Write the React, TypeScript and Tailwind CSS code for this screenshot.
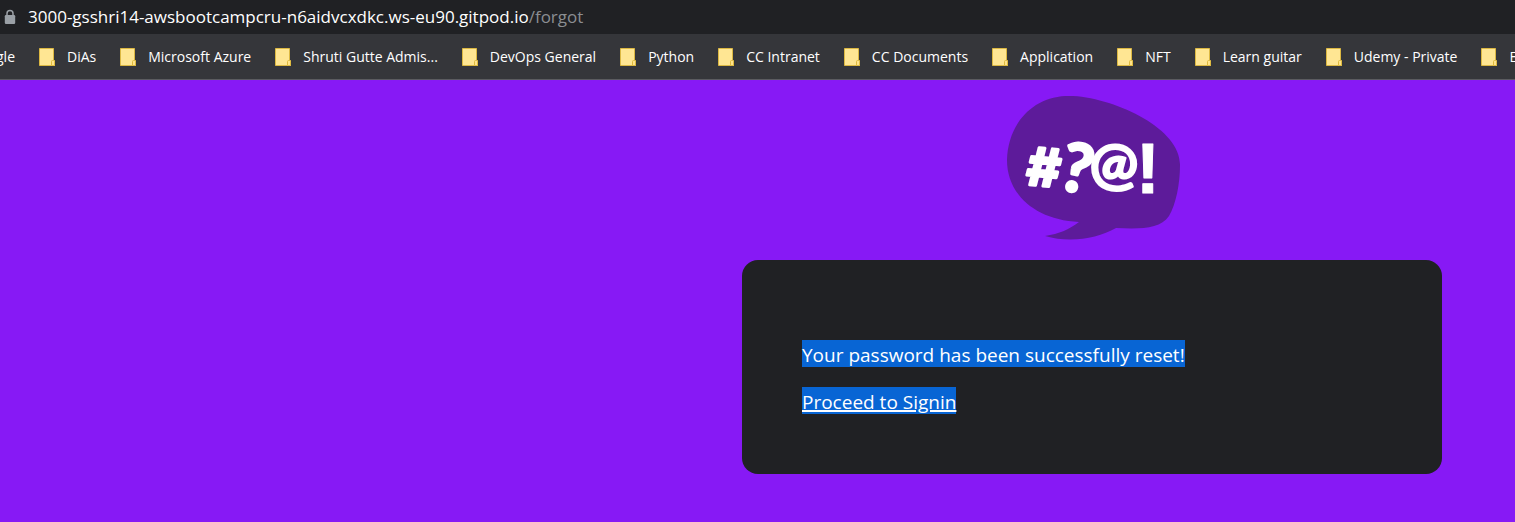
const bookmarks = [
  'DiAs',
  'Microsoft Azure',
  'Shruti Gutte Admis...',
  'DevOps General',
  'Python',
  'CC Intranet',
  'CC Documents',
  'Application',
  'NFT',
  'Learn guitar',
  'Udemy - Private',
  'E',
];

function LockIcon() {
  return (
    <svg className="w-3 shrink-0" viewBox="0 0 12 16" aria-hidden="true">
      <path d="M3 7V4.5a3 3 0 0 1 6 0V7" fill="none" stroke="#9aa0a6" strokeWidth="1.5" />
      <rect x="0.8" y="6" width="10.4" height="9" rx="1.2" fill="#9aa0a6" />
    </svg>
  );
}

function FolderIcon() {
  return (
    <svg className="h-[18px] w-4 shrink-0" viewBox="0 0 16 18" aria-hidden="true">
      <path d="M0.5 0.5H14.5V12.5H15.5V17.5H0.5Z" fill="#ffe693" stroke="#dcb842" />
      <path d="M12.5 17.5V13.5Q12.5 12.5 13.5 12.5H14.5Q15.5 12.5 15.5 13.5V17.5Z" fill="#ffe38a" stroke="#dfba3e" />
    </svg>
  );
}

function Logo() {
  return (
    <svg className="h-36 w-[177px]" viewBox="-3 0 177 144" role="img" aria-label="Cruddur">
      <path
        d="M66 0C112 3 174 34 173 69C173 88 169 108 162 120C153 133 134 133 109 132C90 143 62 147 38 140C52 138 63 133 72 126C29 124 0 99 0 64C1 27 27-2 66 0Z"
        fill="#5d1b9a"
      />
      <g
        className="font-['Lato',sans-serif] font-black"
        fill="#fff"
        stroke="#fff"
        strokeLinejoin="round"
        textAnchor="middle"
      >
        <text
          className="font-['Inter',sans-serif] font-bold"
          x="37"
          y="90"
          fontSize="52"
          strokeWidth="3"
          transform="rotate(5 37 71)"
        >
          #
        </text>
        <text className="font-bold" x="70" y="96" fontSize="67" strokeWidth="3" transform="rotate(12 70 74)">?</text>
        <text className="font-bold" x="107" y="88" fontSize="58" strokeWidth="2">@</text>
        <text className="font-['Liberation_Sans',sans-serif]" x="141" y="97" fontSize="70" strokeWidth="1">!</text>
      </g>
    </svg>
  );
}

export default function App() {
  return (
    <div className="flex min-h-screen flex-col overflow-hidden bg-[#8719f5] font-['Open_Sans','Noto_Sans',sans-serif] text-white">
      <header>
        <div className="flex h-[34px] items-center gap-3 bg-[#202124] pl-1">
          <LockIcon />
          <p className="whitespace-nowrap text-[17px] leading-6">
            3000-gsshri14-awsbootcampcru-n6aidvcxdkc.ws-eu90.gitpod.io
            <span className="text-[#8b8e92]">/forgot</span>
          </p>
        </div>
        <nav
          aria-label="Bookmarks"
          className="flex h-[46px] items-center gap-6 overflow-hidden whitespace-nowrap border-b border-[#5b5c60] bg-[#35363a] text-sm"
        >
          <a href="#google" className="flex w-[15px] shrink-0 justify-end">gle</a>
          {bookmarks.map((name) => (
            <a key={name} href="#bookmark" className="flex shrink-0 items-center gap-3">
              <FolderIcon />
              {name}
            </a>
          ))}
        </nav>
      </header>
      <main className="flex flex-1 justify-end pr-[73px] pt-4">
        <div className="flex w-full max-w-[700px] flex-col items-center gap-5">
          <Logo />
          <section className="flex w-full flex-col items-start gap-5 rounded-2xl bg-[#202124] px-[60px] pb-[60px] pt-20 text-[19px] leading-[23px]">
            <p className="bg-[#0865d4] pt-1">Your password has been successfully reset!</p>
            <a href="#signin" className="bg-[#0865d4] pt-1 underline decoration-2 underline-offset-1">
              Proceed to Signin
            </a>
          </section>
        </div>
      </main>
    </div>
  );
}
